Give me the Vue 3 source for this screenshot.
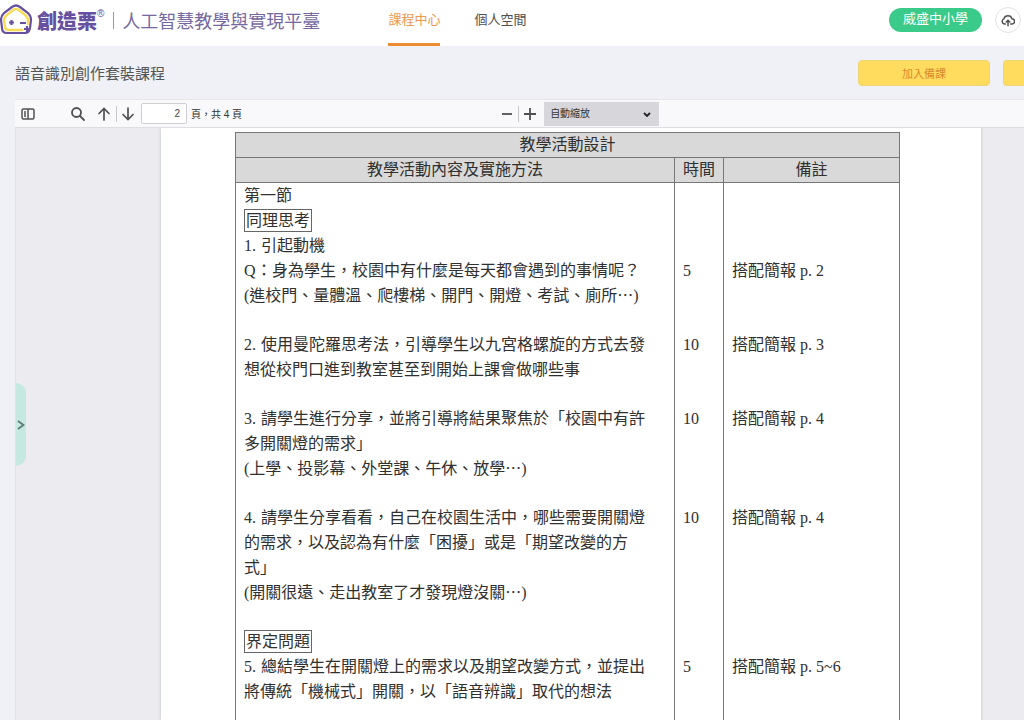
<script setup>
const sections = [
  {
    time: '5', note: '搭配簡報 p. 2', at: 3,
    lines: [
      { text: '第一節' }, { text: '同理思考', boxed: true }, { no: '1.', text: '引起動機' },
      { no: 'Q', text: '：身為學生，校園中有什麼是每天都會遇到的事情呢？', narrow: true },
      { text: '(進校門、量體溫、爬樓梯、開門、開燈、考試、廁所⋯)' }
    ]
  },
  {
    time: '10', note: '搭配簡報 p. 3', at: 0,
    lines: [
      { no: '2.', text: '使用曼陀羅思考法，引導學生以九宮格螺旋的方式去發' },
      { text: '想從校門口進到教室甚至到開始上課會做哪些事' }
    ]
  },
  {
    time: '10', note: '搭配簡報 p. 4', at: 0,
    lines: [
      { no: '3.', text: '請學生進行分享，並將引導將結果聚焦於「校園中有許' },
      { text: '多開關燈的需求」' },
      { text: '(上學、投影幕、外堂課、午休、放學⋯)' }
    ]
  },
  {
    time: '10', note: '搭配簡報 p. 4', at: 0,
    lines: [
      { no: '4.', text: '請學生分享看看，自己在校園生活中，哪些需要開關燈' },
      { text: '的需求，以及認為有什麼「困擾」或是「期望改變的方' },
      { text: '式」' },
      { text: '(開關很遠、走出教室了才發現燈沒關⋯)' }
    ]
  },
  {
    time: '5', note: '搭配簡報 p. 5~6', at: 1,
    lines: [
      { text: '界定問題', boxed: true },
      { no: '5.', text: '總結學生在開關燈上的需求以及期望改變方式，並提出' },
      { text: '將傳統「機械式」開關，以「語音辨識」取代的想法' }
    ]
  }
]
</script>

<template>
  <div class="app">
    <header class="header">
      <a class="brand" href="#">
        <svg class="mark" viewBox="0 0 34 32" aria-hidden="true">
          <path d="M7 29Q2 29 2 24L1 16Q1 12 4 9L12 3Q16 0 20 3L28 9Q31 12 31 16L30 24Q29 29 25 29Z" fill="#fff" stroke="#66509f" stroke-width="2.2" />
          <path d="M22 26H8Q5 26 5 22L4 17Q4 13 7 11L13 6Q16 4 19 6L25 11Q28 13 28 17V20" fill="none" stroke="#f9dc55" stroke-width="2.4" stroke-linecap="round" />
          <path d="M9 18.500H14M11.500 16V21M20 19H26M24 25H30M27 22V28" fill="none" stroke="#66509f" stroke-width="2.200" />
        </svg>
        <strong class="name">創造栗</strong><sup class="reg">®</sup>
        <span class="bar"></span>
        <span class="slogan">人工智慧教學與實現平臺</span>
      </a>
      <nav class="nav">
        <a class="active" href="#">課程中心</a>
        <a href="#">個人空間</a>
      </nav>
      <div class="account">
        <button class="school" type="button">威盛中小學</button>
        <button class="cloud" type="button" aria-label="上傳">
          <svg viewBox="0 0 16 14" width="14" height="13" fill="none" stroke="#505050" stroke-width="1.700" stroke-linecap="round" stroke-linejoin="round">
            <path d="M5 11H4A3 3 0 0 1 3.300 5.200A4.800 4.800 0 0 1 12.500 5A3 3 0 0 1 12.500 11H11M8 13V7M6 8.800L8 6.800L10 8.800" />
          </svg>
        </button>
      </div>
    </header>

    <section class="titlebar">
      <h1>語音識別創作套裝課程</h1>
      <div class="actions">
        <button type="button">加入備課</button>
        <button type="button" class="more" aria-label="更多"></button>
      </div>
    </section>

    <main class="viewer">
      <div class="toolbar">
        <div class="tools">
          <button class="side" type="button" aria-label="側邊欄">
            <svg viewBox="0 0 14 12" width="14" height="12" fill="none" stroke="#505053" stroke-width="1.500"><rect x="1" y="1" width="12" height="10" rx="1.500" /><path d="M7 1V11M3 4H5M3 6H5M3 8H5" /></svg>
          </button>
          <button class="find" type="button" aria-label="尋找">
            <svg viewBox="0 0 16 16" width="16" height="16" fill="none" stroke="#505053" stroke-width="1.800" stroke-linecap="round"><circle cx="6.500" cy="6.500" r="4.500" /><path d="M10 10L14 14" /></svg>
          </button>
          <button class="up" type="button" aria-label="上一頁">
            <svg viewBox="0 0 14 14" width="14" height="14" fill="none" stroke="#505053" stroke-width="1.700" stroke-linecap="round"><path d="M7 13V1.500M2 6.500L7 1.500L12 6.500" /></svg>
          </button>
          <span class="sep"></span>
          <button class="down" type="button" aria-label="下一頁">
            <svg viewBox="0 0 14 14" width="14" height="14" fill="none" stroke="#505053" stroke-width="1.700" stroke-linecap="round"><path d="M7 1V12.500M2 7.500L7 12.500L12 7.500" /></svg>
          </button>
          <input id="page" type="text" value="2">
          <label for="page">頁，共 4 頁</label>
        </div>
        <div class="zoom">
          <button type="button" aria-label="縮小"><svg viewBox="0 0 12 12" width="12" height="12" stroke="#505053" stroke-width="1.800"><path d="M1 6H11" /></svg></button>
          <span class="sep"></span>
          <button type="button" aria-label="放大"><svg viewBox="0 0 12 12" width="12" height="12" stroke="#505053" stroke-width="1.800"><path d="M0 6H12M6 0V12" /></svg></button>
          <div class="scale">
            <select aria-label="縮放"><option>自動縮放</option></select>
            <svg viewBox="0 0 8 6" width="8" height="6" fill="none" stroke="#222" stroke-width="1.800"><path d="M1 1L4 4L7 1" /></svg>
          </div>
        </div>
      </div>

      <div class="canvas">
        <button class="drawer" type="button" aria-label="展開">
          <svg viewBox="0 0 8 12" width="8" height="12" fill="none" stroke="#5f7a74" stroke-width="1.800"><path d="M1 2L6.500 6L1 10" /></svg>
        </button>
        <article class="paper">
          <table>
            <colgroup><col><col class="c-time"><col class="c-note"></colgroup>
            <thead>
              <tr><th colspan="3">教學活動設計</th></tr>
              <tr><th>教學活動內容及實施方法</th><th>時間</th><th>備註</th></tr>
            </thead>
            <tbody>
              <tr v-for="(s, i) in sections" :key="i">
                <td>
                  <p v-for="(l, j) in s.lines" :key="j">
                    <span v-if="l.no" class="no" :class="{ narrow: l.narrow }">{{ l.no }}</span><span :class="{ boxed: l.boxed }">{{ l.text }}</span>
                  </p>
                </td>
                <td><p v-for="n in s.at" :key="n">&nbsp;</p><p>{{ s.time }}</p></td>
                <td><p v-for="n in s.at" :key="n">&nbsp;</p><p>{{ s.note }}</p></td>
              </tr>
            </tbody>
          </table>
        </article>
      </div>
    </main>
  </div>
</template>

<style>
body { margin: 0; background: #eff1f6; }
</style>

<style scoped>
* { box-sizing: border-box; }
.app {
  height: 100vh;
  display: flex;
  flex-direction: column;
  overflow: hidden;
  background: #eff1f6;
  color: #505050;
  font-family: "Liberation Sans", "Noto Sans CJK TC", sans-serif;
}
button { padding: 0; border: 0; background: none; font: inherit; color: inherit; display: flex; align-items: center; justify-content: center; flex: none; }
a { color: inherit; text-decoration: none; }
.header { flex: none; height: 46px; background: #fff; display: flex; align-items: stretch; }
.brand { display: flex; align-items: center; height: 40px; color: #66509f; white-space: nowrap; }
.mark { width: 34px; height: 32px; margin-right: 3px; }
.name { font-size: 20px; font-weight: 900; }
.reg { font-size: 10px; align-self: flex-start; margin-top: 8px; line-height: 12px; }
.bar { width: 1px; height: 17px; background: #9b96ad; margin: 0 8px 0 9px; }
.slogan { font-size: 18px; color: #7568a0; }
.nav { display: flex; gap: 34px; margin-left: 68px; font-size: 13px; white-space: nowrap; }
.nav a { line-height: 40px; height: 46px; border-bottom: 3px solid transparent; }
.nav .active { color: #ec9850; border-color: #ee8c32; }
.account { margin-left: auto; height: 40px; display: flex; align-items: center; gap: 13px; padding-right: 3px; }
.school { width: 93px; height: 24px; border-radius: 12px; background: #3acb8a; color: #fff; font-size: 13px; line-height: 22px; padding-bottom: 2px; }
.cloud { width: 26px; height: 26px; border: 1px solid #e2e2e4; border-radius: 50%; }
.titlebar { flex: none; height: 53px; display: flex; align-items: center; justify-content: space-between; padding-left: 15px; }
h1 { margin: 0; font-size: 15px; font-weight: 400; color: #555; }
.actions { display: flex; gap: 13px; }
.actions button { width: 132px; height: 26px; border-radius: 4px; background: #ffdc5e; border: 1px solid #eed476; color: #d98a2c; font-size: 11px; }
.actions .more { width: 21px; border-right: 0; border-radius: 4px 0 0 4px; }
.viewer { flex: 1; min-height: 0; margin-left: 15px; display: flex; flex-direction: column; }
.toolbar { flex: none; height: 29px; display: flex; align-items: center; background: #f9f9fb; border-top: 1px solid #e6e6e9; border-bottom: 1px solid #dedee2; font-size: 10px; }
.tools, .zoom { display: flex; align-items: center; }
.tools { flex: none; padding-left: 6px; }
.find { margin-left: 35px; }
.up { margin-left: 11px; }
.sep { width: 1px; height: 16px; background: #c8c8cc; }
.up + .sep { margin: 0 4px 0 5px; }
input { width: 46px; height: 21px; margin: 0 4px 0 6px; padding: 0 6px; border: 1px solid #cfcfd3; border-radius: 2px; background: #fff; color: #444; text-align: right; font: 10px "Liberation Sans", sans-serif; }
.tools label { white-space: nowrap; color: #333; }
.zoom { margin-left: 259px; gap: 5px; }
.scale { position: relative; margin-left: 3px; }
select { appearance: none; display: block; width: 115px; height: 24px; border: 0; padding: 0 6px; background: #d7d7db; color: #333; font: 10px "Liberation Sans", "Noto Sans CJK TC", sans-serif; }
.scale svg { position: absolute; right: 8px; top: 10px; }
.canvas { position: relative; flex: 1; min-height: 0; overflow: hidden; display: flex; background: #ebebf0; border-left: 1px solid #e2e2e7; padding: 0 43px 0 145px; }
.drawer { position: absolute; left: 0; top: 255px; width: 10px; height: 83px; background: #c5e9e0; border-radius: 0 10px 10px 0; }
.paper { flex: 1; background: #fff; padding: 4px 81px 0 74px; box-shadow: 0 0 3px #bbbbc2; }
table { width: 100%; table-layout: fixed; border-collapse: collapse; color: #303030; font: 16px/25px "Liberation Serif", "Noto Sans CJK TC", serif; }
.c-time { width: 49px; }
.c-note { width: 176px; }
th { height: 25px; padding: 0; background: #d9d9d9; border: 1px solid #777; font-weight: 400; line-height: 24px; }
td { padding: 0 7px 24px 8px; vertical-align: top; border: solid #777; border-width: 0 1px; white-space: nowrap; }
p { margin: 0; height: 25px; }
.no { display: inline-block; width: 17px; }
.narrow { width: 12px; }
.boxed { display: inline-block; height: 23px; line-height: 21px; margin-top: 1px; padding: 0 1px; border: 1px solid #666; vertical-align: top; }
</style>
